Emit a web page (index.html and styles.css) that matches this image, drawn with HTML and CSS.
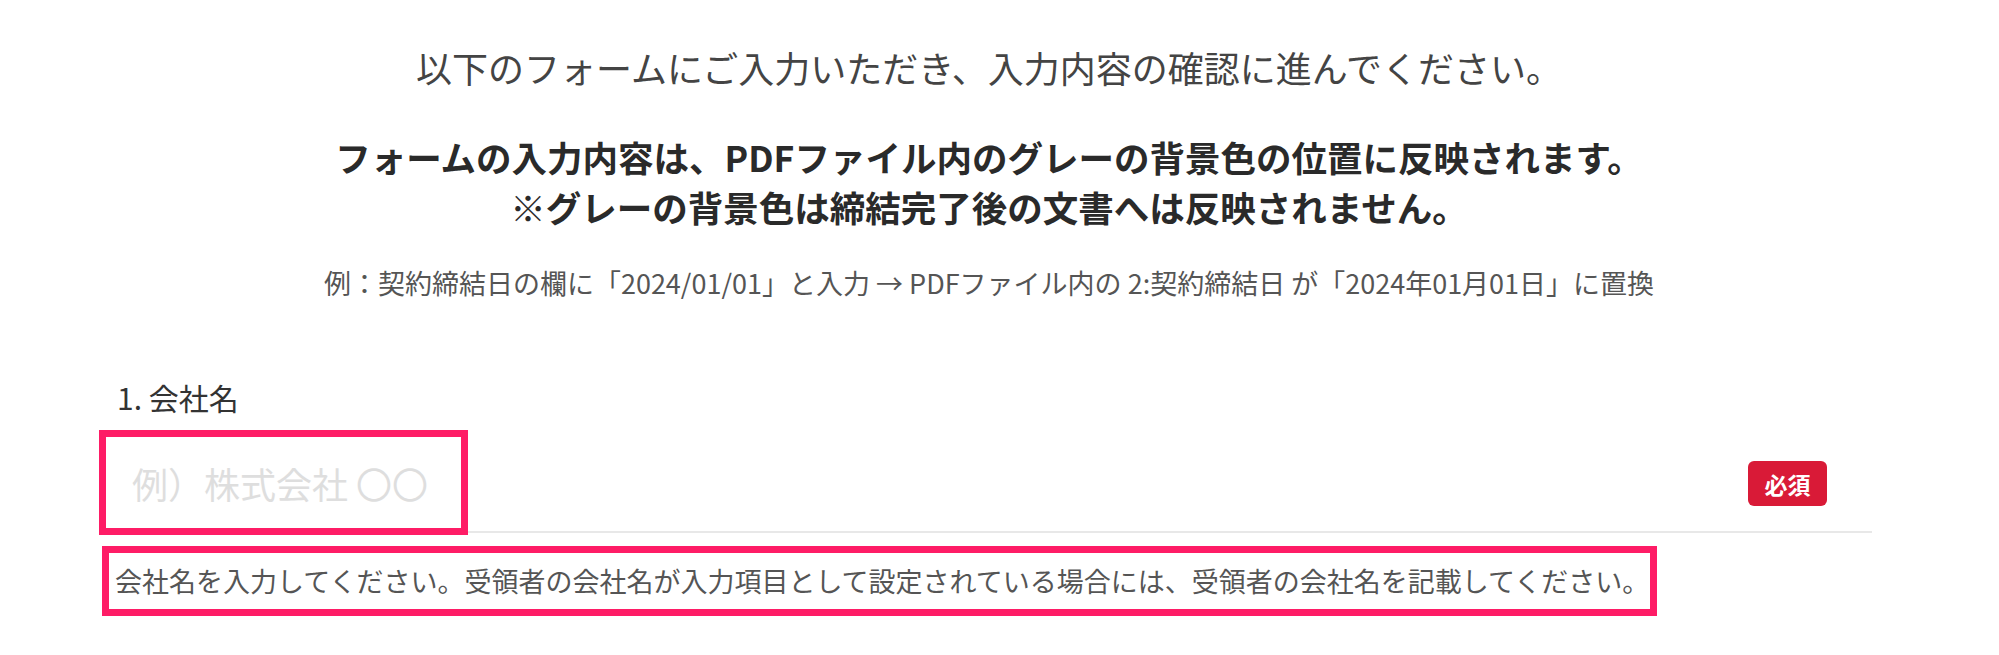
FILE: index.html
```html
<!DOCTYPE html>
<html lang="ja">
<head>
<meta charset="utf-8">
<title>フォーム入力</title>
<link rel="stylesheet" href="styles.css">
</head>
<body>
<main class="wrap">
  <section class="intro">
    <p class="lead">以下のフォームにご入力いただき、入力内容の確認に進んでください。</p>
    <p class="strong">フォームの入力内容は、PDFファイル内のグレーの背景色の位置に反映されます。<br>※グレーの背景色は締結完了後の文書へは反映されません。</p>
    <p class="example">例：契約締結日の欄に「2024/01/01」と入力 → PDFファイル内の 2:契約締結日 が「2024年01月01日」に置換</p>
  </section>
  <section class="field">
    <div class="label">1. 会社名</div>
    <div class="input-row">
      <div class="input mark"><span class="placeholder">例）株式会社 〇〇</span></div>
      <span class="badge">必須</span>
    </div>
    <div class="note mark">会社名を入力してください。受領者の会社名が入力項目として設定されている場合には、受領者の会社名を記載してください。</div>
  </section>
</main>
</body>
</html>
```

FILE: styles.css
```css
* { box-sizing: border-box; }
html, body { margin: 0; padding: 0; background: #fff; }
body {
  font-family: "Noto Sans CJK JP", "Noto Sans", sans-serif;
  color: #333;
  min-height: 655px;
}
.wrap {
  width: 1872px;
  padding-left: 99px;
  padding-bottom: 30px;
}
.intro { text-align: center; padding-left: 7px; }
.intro p { margin: 0; }
.lead {
  padding-top: 41px;
  font-size: 36px;
  line-height: 52px;
  color: #444;
}
.strong {
  margin-top: 39px !important;
  font-size: 35.5px;
  line-height: 50px;
  font-weight: 700;
  color: #2a2a2a;
}
.example {
  margin-top: 33px !important;
  font-size: 27px;
  line-height: 36px;
  color: #555;
}
.field { margin-top: 76px; }
.label {
  padding-left: 18px;
  font-size: 30px;
  line-height: 40px;
  color: #333;
}
.input-row {
  margin-top: 13px;
  display: flex;
  align-items: flex-start;
  justify-content: space-between;
  height: 103px;
  border-bottom: 2px solid #e8e8e8;
}
.mark { border: 7px solid #fe1c66; }
.input {
  position: relative;
  z-index: 1;
  flex: none;
  width: 369px;
  height: 105px;
  padding-left: 26px;
  display: flex;
  align-items: center;
  background: #fff;
}
.placeholder {
  font-size: 36px;
  color: #dedede;
  white-space: nowrap;
}
.badge {
  align-self: center;
  margin-top: 6px;
  margin-right: 45px;
  width: 79px;
  height: 45px;
  border-radius: 6px;
  background: #d91a37;
  color: #fff;
  font-size: 23px;
  font-weight: 700;
  display: flex;
  align-items: center;
  justify-content: center;
}
.note {
  margin-top: 13px;
  margin-left: 3px;
  width: fit-content;
  height: 70px;
  padding: 0 1px 0 6px;
  font-size: 27px;
  line-height: 56px;
  color: #555;
  white-space: nowrap;
}
```
